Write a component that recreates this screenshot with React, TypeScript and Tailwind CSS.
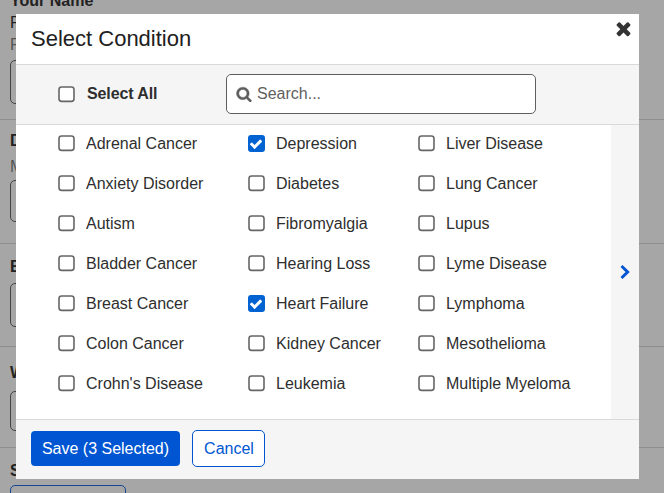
import React, { useState } from "react";

const COLUMNS: { width: string; items: string[] }[] = [
  {
    width: "w-[190px]",
    items: ["Adrenal Cancer", "Anxiety Disorder", "Autism", "Bladder Cancer", "Breast Cancer", "Colon Cancer", "Crohn's Disease"],
  },
  {
    width: "w-[170px]",
    items: ["Depression", "Diabetes", "Fibromyalgia", "Hearing Loss", "Heart Failure", "Kidney Cancer", "Leukemia"],
  },
  {
    width: "w-[190px]",
    items: ["Liver Disease", "Lung Cancer", "Lupus", "Lyme Disease", "Lymphoma", "Mesothelioma", "Multiple Myeloma"],
  },
];

function CloseIcon() {
  return (
    <svg viewBox="0 0 1792 1792" className="size-[21px]" fill="currentColor">
      <path d="M1490 1322q0 40-28 68l-136 136q-28 28-68 28t-68-28l-294-294-294 294q-28 28-68 28t-68-28l-136-136q-28-28-28-68t28-68l294-294-294-294q-28-28-28-68t28-68l136-136q28-28 68-28t68 28l294 294 294-294q28-28 68-28t68 28l136 136q28 28 28 68t-28 68l-294 294 294 294q28 28 28 68z" />
    </svg>
  );
}

function SearchIcon() {
  return (
    <svg viewBox="0 0 1792 1792" className="size-4 shrink-0" fill="currentColor" stroke="currentColor" strokeWidth="50">
      <path d="M1216 832q0-185-131.5-316.5t-316.5-131.5-316.5 131.5-131.5 316.5 131.5 316.5 316.5 131.5 316.5-131.5 131.5-316.5zm512 832q0 52-38 90t-90 38q-54 0-90-38l-343-342q-179 124-399 124-143 0-273.5-55.5t-225-150-150-225-55.5-273.5 55.5-273.5 150-225 225-150 273.5-55.5 273.5 55.5 225 150 150 225 55.5 273.5q0 220-124 399l343 343q37 37 37 90z" />
    </svg>
  );
}

function CheckMark() {
  return (
    <svg viewBox="0 0 1792 1792" className="size-[14px]" fill="white">
      <path d="M1671 566q0 40-28 68l-724 724-136 136q-28 28-68 28t-68-28l-136-136-362-362q-28-28-28-68t28-68l136-136q28-28 68-28t68 28l294 295 656-657q28-28 68-28t68 28l136 136q28 28 28 68z" />
    </svg>
  );
}

function Box({ checked = false }: { checked?: boolean }) {
  return (
    <span className="flex h-[17px] w-4 shrink-0 items-center justify-center">
      {checked ? (
        <span className="flex size-[17px] shrink-0 items-center justify-center rounded-[3px] bg-[#0063d1]">
          <CheckMark />
        </span>
      ) : (
        <svg viewBox="0 0 17 17" className="h-[17px] w-[17px] shrink-0">
          <rect x="1" y="1" width="15" height="14.4" rx="2.6" fill="white" stroke="#666" strokeWidth="1.6" />
        </svg>
      )}
    </span>
  );
}

function Backdrop() {
  return (
    <div className="flex h-full flex-col bg-[#a6a6a6] text-base leading-[22px] text-[#222]">
      <section className="h-[120px] shrink-0 border-b border-[#8e8e8e] pl-[10px]">
        <div className="-mt-[10px] font-bold">Your Name</div>
        <div className="">P</div>
        <div className="text-[#555]">F</div>
        <div className="mt-1 h-11 w-[500px] rounded-[5px] border border-[#444]" />
      </section>
      <section className="h-[124px] shrink-0 border-b border-[#8e8e8e] pt-[10px] pl-[10px]">
        <div className="font-bold">D</div>
        <div className="pt-1 text-[#555]">M</div>
        <div className="mt-[2px] h-[42px] w-[500px] rounded-[5px] border border-[#444]" />
      </section>
      <section className="h-[103px] shrink-0 border-b border-[#8e8e8e] pt-3 pl-[10px]">
        <div className="font-bold">E</div>
        <div className="mt-[5px] h-11 w-[500px] rounded-[5px] border border-[#444]" />
      </section>
      <section className="h-[101px] shrink-0 border-b border-[#8e8e8e] pt-[15px] pl-[10px]">
        <div className="font-bold">W</div>
        <div className="mt-[7px] h-10 w-[500px] rounded-[5px] border border-[#444]" />
      </section>
      <section className="shrink-0 pt-3 pl-[10px]">
        <div className="font-bold">S</div>
        <div className="mt-[3px] h-10 w-[116px] rounded-[5px] border border-[#164690]" />
      </section>
    </div>
  );
}

export default function App() {
  const [selected, setSelected] = useState<string[]>(["Depression", "Heart Failure"]);
  const toggle = (name: string) =>
    setSelected((s) => (s.includes(name) ? s.filter((n) => n !== name) : [...s, name]));

  return (
    <div className="relative h-[493px] w-[664px] overflow-hidden font-['Liberation_Sans',Arial,sans-serif]">
      <Backdrop />
      <div className="absolute top-[14px] left-4 flex h-[465px] w-[623px] flex-col bg-white text-[#2e2e2e]">
        <header className="flex h-[51px] shrink-0 items-start justify-between border-b border-[#d9d9d9] pr-[5px] pl-[15px]">
          <h1 className="pt-[9px] text-[22px] leading-8 text-[#212121]">Select Condition</h1>
          <button aria-label="Close" className="mt-1 text-[#333]">
            <CloseIcon />
          </button>
        </header>
        <div className="flex h-[60px] shrink-0 items-center border-b border-[#d9d9d9] bg-[#f5f5f5] pb-px pl-[42px]">
          <div className="flex w-[168px] items-center gap-[13px] font-bold">
            <Box />
            <span className="tracking-[-0.1px]">Select All</span>
          </div>
          <div className="flex h-10 w-[310px] items-center gap-[5px] rounded-[5px] border border-[#5f5f5f] bg-white pl-[9px] text-[#5f5f5f]">
            <SearchIcon />
            <span>Search...</span>
          </div>
        </div>
        <main className="flex min-h-0 flex-1">
          <div className="flex flex-1 pl-[42px]">
            {COLUMNS.map((col) => (
              <div key={col.items[0]} className={`flex flex-col ${col.width}`}>
                {col.items.map((item) => (
                  <div key={item} onClick={() => toggle(item)} className="flex h-10 items-center gap-3 pb-[3px]">
                    <Box checked={selected.includes(item)} />
                    <span className="whitespace-nowrap">{item}</span>
                  </div>
                ))}
              </div>
            ))}
          </div>
          <button aria-label="Next" className="flex w-7 items-center justify-center bg-[#f5f5f5] text-[#0056d2]">
            <svg viewBox="0 0 10 16" className="h-4 w-[10px]" fill="none" stroke="currentColor" strokeWidth="3">
              <path d="M1.5 2L7.6 8L1.5 14" />
            </svg>
          </button>
        </main>
        <footer className="flex h-[60px] shrink-0 items-center gap-3 border-t border-[#d9d9d9] bg-[#f5f5f5] pb-[2px] pl-[15px]">
          <button className="h-[35px] w-[149px] rounded-[4px] bg-[#0056d2] text-white">Save (3 Selected)</button>
          <button className="h-[37px] w-[73px] rounded-[5px] border border-[#0056d2] bg-white pl-px text-[#0056d2]">Cancel</button>
        </footer>
      </div>
    </div>
  );
}
